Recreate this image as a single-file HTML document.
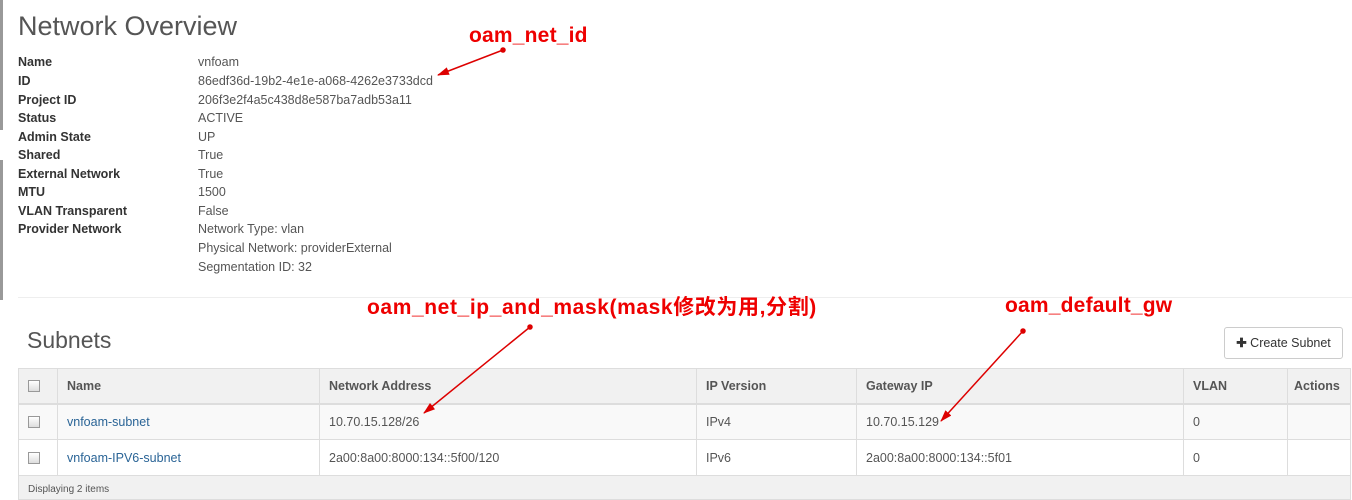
<!DOCTYPE html>
<html><head><meta charset="utf-8"><style>
body{margin:0;width:1352px;height:498px;overflow:hidden;background:#fff;font-family:"Liberation Sans",Arial,sans-serif;color:#333;position:relative}
.abs{position:absolute;white-space:nowrap}
h1{position:absolute;left:18px;top:11px;margin:0;font-weight:normal;font-size:27px;color:#555}
.lab{position:absolute;left:18px;font-size:12.5px;font-weight:bold;color:#333}
.val{position:absolute;left:198px;font-size:12.5px;color:#555}
.red{position:absolute;color:#e00;font-weight:bold;font-size:21px;font-family:"Liberation Sans","Noto Sans CJK SC",sans-serif;white-space:nowrap}
table{position:absolute;left:18px;top:368px;width:1332px;border-collapse:collapse;font-size:12.5px;table-layout:fixed}
td,th{border:1px solid #ddd;padding:0 9px;text-align:left;color:#555;box-sizing:border-box;overflow:hidden;white-space:nowrap}
th{background:#f1f1f1;font-weight:bold;border-bottom:2px solid #ddd;height:35px}
td{height:36px}
tr.a td{background:#f9f9f9}
.cb{display:inline-block;width:10px;height:10px;border:1px solid #999;background:linear-gradient(#fff,#ddd);vertical-align:middle}
a{color:#2a6496;text-decoration:none}
</style></head><body>
<div class="abs" style="left:0;top:0;width:3px;height:130px;background:#999"></div>
<div class="abs" style="left:0;top:160px;width:3px;height:140px;background:#999"></div>
<h1>Network Overview</h1>
<div class="lab" style="top:55px">Name</div><div class="val" style="top:55px">vnfoam</div>
<div class="lab" style="top:74px">ID</div><div class="val" style="top:74px">86edf36d-19b2-4e1e-a068-4262e3733dcd</div>
<div class="lab" style="top:93px">Project ID</div><div class="val" style="top:93px">206f3e2f4a5c438d8e587ba7adb53a11</div>
<div class="lab" style="top:111px">Status</div><div class="val" style="top:111px">ACTIVE</div>
<div class="lab" style="top:130px">Admin State</div><div class="val" style="top:130px">UP</div>
<div class="lab" style="top:148px">Shared</div><div class="val" style="top:148px">True</div>
<div class="lab" style="top:167px">External Network</div><div class="val" style="top:167px">True</div>
<div class="lab" style="top:185px">MTU</div><div class="val" style="top:185px">1500</div>
<div class="lab" style="top:204px">VLAN Transparent</div><div class="val" style="top:204px">False</div>
<div class="lab" style="top:222px">Provider Network</div><div class="val" style="top:222px">Network Type: vlan</div>
<div class="val" style="top:241px">Physical Network: providerExternal</div>
<div class="val" style="top:260px">Segmentation ID: 32</div>
<div class="abs" style="left:18px;top:297px;width:1334px;height:1px;background:#eee"></div>
<div class="abs" style="left:27px;top:327px;font-size:23px;color:#555">Subnets</div>
<div class="abs" style="left:1224px;top:327px;width:117px;height:30px;border:1px solid #ccc;border-radius:3px;font-size:12.5px;line-height:30px;text-align:center;color:#333"><b>✚</b> Create Subnet</div>
<table>
<colgroup><col style="width:39px"><col style="width:262px"><col style="width:377px"><col style="width:160px"><col style="width:327px"><col style="width:104px"><col style="width:63px"></colgroup>
<tr><th><span class="cb"></span></th><th>Name</th><th>Network Address</th><th>IP Version</th><th>Gateway IP</th><th>VLAN</th><th style="padding:0 6px">Actions</th></tr>
<tr class="a"><td><span class="cb"></span></td><td><a>vnfoam-subnet</a></td><td>10.70.15.128/26</td><td>IPv4</td><td>10.70.15.129</td><td>0</td><td></td></tr>
<tr><td><span class="cb"></span></td><td><a>vnfoam-IPV6-subnet</a></td><td>2a00:8a00:8000:134::5f00/120</td><td>IPv6</td><td>2a00:8a00:8000:134::5f01</td><td>0</td><td></td></tr>
<tr><td colspan="7" style="background:#f1f1f1;height:24px;font-size:10px;padding-top:8px;vertical-align:top">Displaying 2 items</td></tr>
</table>
<div class="red" style="left:469px;top:24px;letter-spacing:0.2px">oam_net_id</div>
<div class="red" style="left:367px;top:291px;letter-spacing:0.6px">oam_net_ip_and_mask(mask修改为用,分割)</div>
<div class="red" style="left:1005px;top:294px;letter-spacing:0.2px">oam_default_gw</div>
<svg class="abs" style="left:0;top:0" width="1352" height="498">
<defs><marker id="m" markerWidth="12" markerHeight="8" refX="11" refY="4" orient="auto" markerUnits="userSpaceOnUse"><path d="M0,0L12,4L0,8Z" fill="#d00"/></marker></defs>
<g stroke="#d00" stroke-width="1.5" fill="#d00">
<line x1="503" y1="50" x2="438" y2="75" marker-end="url(#m)"/><circle cx="503" cy="50" r="2"/>
<line x1="530" y1="327" x2="424" y2="413" marker-end="url(#m)"/><circle cx="530" cy="327" r="2"/>
<line x1="1023" y1="331" x2="941" y2="421" marker-end="url(#m)"/><circle cx="1023" cy="331" r="2"/>
</g></svg>
</body></html>
